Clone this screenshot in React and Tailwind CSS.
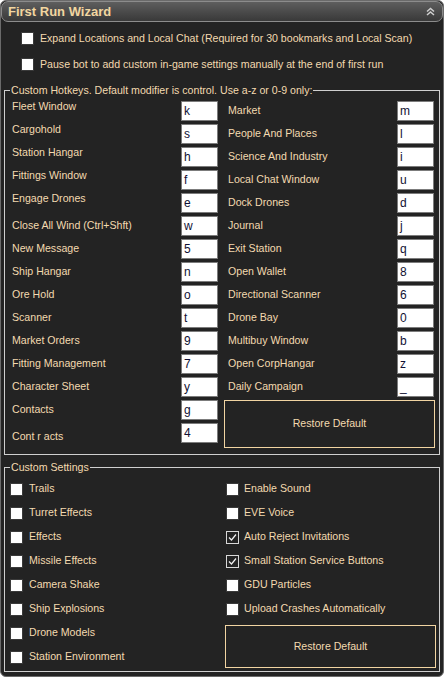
import React from "react";

const leftKeys = [
  { label: "Fleet Window", key: "k", up: true },
  { label: "Cargohold", key: "s", up: true },
  { label: "Station Hangar", key: "h", up: true },
  { label: "Fittings Window", key: "f", up: true },
  { label: "Engage Drones", key: "e", up: true },
  { label: "Close All Wind (Ctrl+Shft)", key: "w" },
  { label: "New Message", key: "5" },
  { label: "Ship Hangar", key: "n" },
  { label: "Ore Hold", key: "o" },
  { label: "Scanner", key: "t" },
  { label: "Market Orders", key: "9" },
  { label: "Fitting Management", key: "7" },
  { label: "Character Sheet", key: "y" },
  { label: "Contacts", key: "g" },
  { label: "Cont r acts", key: "4", down: true },
];

const rightKeys = [
  { label: "Market", key: "m" },
  { label: "People And Places", key: "l" },
  { label: "Science And Industry", key: "i" },
  { label: "Local Chat Window", key: "u" },
  { label: "Dock Drones", key: "d" },
  { label: "Journal", key: "j" },
  { label: "Exit Station", key: "q" },
  { label: "Open Wallet", key: "8" },
  { label: "Directional Scanner", key: "6" },
  { label: "Drone Bay", key: "0" },
  { label: "Multibuy Window", key: "b" },
  { label: "Open CorpHangar", key: "z" },
  { label: "Daily Campaign", key: "_" },
];

const leftSettings = [
  "Trails",
  "Turret Effects",
  "Effects",
  "Missile Effects",
  "Camera Shake",
  "Ship Explosions",
  "Drone Models",
  "Station Environment",
];

const rightSettings = [
  { label: "Enable Sound" },
  { label: "EVE Voice" },
  { label: "Auto Reject Invitations", checked: true },
  { label: "Small Station Service Buttons", checked: true },
  { label: "GDU Particles" },
  { label: "Upload Crashes Automatically" },
];

const Box = ({ checked }) =>
  checked ? (
    <span className="w-[13px] h-[13px] shrink-0 border border-[#d8d8d8] bg-[#232323] flex items-center justify-center">
      <svg width="11" height="11" viewBox="0 0 11 11">
        <path d="M2 5.5 L4.5 8 L9 2.5" fill="none" stroke="#f0f0f0" strokeWidth="1.2" />
      </svg>
    </span>
  ) : (
    <span className="w-[13px] h-[13px] shrink-0 bg-white border border-[#3a3a3a]" />
  );

const KeyInput = ({ value }) => (
  <div className="w-[37px] h-[20px] bg-white border border-[#7c7c7c] pl-[2px] text-[12px] leading-[18px] text-[#111133]">
    {value}
  </div>
);

const RestoreButton = ({ className }) => (
  <button className={`w-[211px] border border-[#f1d4a2] flex items-center justify-center text-[10.6px] text-[#f3dab0] ${className}`}>
    Restore Default
  </button>
);

export default function App() {
  return (
    <div
      className="w-[444px] h-[677px] bg-[#232323] border border-[#6a6a6a] rounded-[6px] overflow-hidden text-[10.6px] text-[#f3dab0]"
      style={{ fontFamily: '"Liberation Sans", Arial, sans-serif' }}
    >
      {/* title bar */}
      <div className="h-[21px] rounded-[7px] border border-[#8c8c8c] bg-gradient-to-b from-[#5e5e5e] to-[#393939] flex items-center justify-between pl-[6px] pr-[7px]">
        <span className="font-bold text-[13px] text-[#f2d6a0] leading-none">First Run Wizard</span>
        <svg width="9" height="9" viewBox="0 0 9 9">
          <path d="M1 4.5 L4.5 1.5 L8 4.5" fill="none" stroke="#cfcfcf" strokeWidth="1.5" />
          <path d="M1 8 L4.5 5 L8 8" fill="none" stroke="#cfcfcf" strokeWidth="1.5" />
        </svg>
      </div>

      <div className="pl-[20px] pt-[10px] flex flex-col gap-[13px]">
        <label className="flex items-center gap-[6px] h-[13px]">
          <Box />
          <span>Expand Locations and Local Chat (Required for 30 bookmarks and Local Scan)</span>
        </label>
        <label className="flex items-center gap-[6px] h-[13px]">
          <Box />
          <span>Pause bot to add custom in-game settings manually at the end of first run</span>
        </label>
      </div>

      {/* hotkeys */}
      <fieldset className="mx-[3px] mt-[13px] h-[371px] border border-[#cfcfcf] flex">
        <legend className="ml-[5px] px-[1px] leading-[13px]">
          Custom Hotkeys. Default modifier is control. Use a-z or 0-9 only:
        </legend>
        <div className="flex pt-[4px]">
          <div className="w-[219px] pl-[7px] pr-[6px] flex flex-col gap-[3px]">
            {leftKeys.map((k) => (
              <div key={k.label} className="h-[20px] flex items-center justify-between">
                <span
                  className={
                    k.up ? "-translate-y-[4px]" : k.down ? "translate-y-[4px]" : "translate-y-0"
                  }
                >
                  {k.label}
                </span>
                <KeyInput value={k.key} />
              </div>
            ))}
          </div>
          <div className="w-[212px] flex flex-col">
            <div className="pl-[4px] pr-[2px] flex flex-col gap-[3px]">
              {rightKeys.map((k) => (
                <div key={k.label} className="h-[20px] flex items-center justify-between">
                  <span>{k.label}</span>
                  <KeyInput value={k.key} />
                </div>
              ))}
            </div>
            <RestoreButton className="mt-[3px] h-[48px]" />
          </div>
        </div>
      </fieldset>

      {/* settings */}
      <fieldset className="mx-[3px] mt-[6px] h-[211px] border border-[#cfcfcf]">
        <legend className="ml-[5px] px-[1px] leading-[13px]">Custom Settings</legend>
        <div className="flex pt-[3px]">
          <div className="w-[220px] pl-[5px] flex flex-col">
            {leftSettings.map((s) => (
              <label key={s} className="h-[24px] flex items-center gap-[6px]">
                <Box />
                <span>{s}</span>
              </label>
            ))}
          </div>
          <div className="w-[212px] flex flex-col">
            {rightSettings.map((s) => (
              <label key={s.label} className="h-[24px] pl-[1px] flex items-center gap-[5px]">
                <Box checked={s.checked} />
                <span>{s.label}</span>
              </label>
            ))}
            <RestoreButton className="mt-[4px] h-[43px]" />
          </div>
        </div>
      </fieldset>
    </div>
  );
}
